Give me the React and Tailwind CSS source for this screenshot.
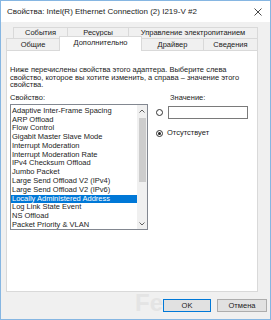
import React from 'react';

const props = [
  'Adaptive Inter-Frame Spacing',
  'ARP Offload',
  'Flow Control',
  'Gigabit Master Slave Mode',
  'Interrupt Moderation',
  'Interrupt Moderation Rate',
  'IPv4 Checksum Offload',
  'Jumbo Packet',
  'Large Send Offload V2 (IPv4)',
  'Large Send Offload V2 (IPv6)',
  'Locally Administered Address',
  'Log Link State Event',
  'NS Offload',
  'Packet Priority & VLAN',
];

function Radio({ checked }) {
  return (
    <span className="w-[7px] h-[7px] rounded-full border border-[#333] bg-white flex items-center justify-center shrink-0">
      {checked && <span className="w-[3px] h-[3px] rounded-full bg-[#222]" />}
    </span>
  );
}

export default function App() {
  return (
    <div className="relative w-[271px] h-[320px] border border-[#86b6e2] bg-[#f0f0f0] flex flex-col overflow-hidden font-['Liberation_Sans',Arial,sans-serif] text-[7.5px] text-[#1b1b1b]">
      {/* заголовок окна */}
      <div className="h-[21px] bg-white flex items-center pl-[6px] pr-[8px] shrink-0">
        <span className="flex-1 text-[8px] text-[#222]">Свойства: Intel(R) Ethernet Connection (2) I219-V #2</span>
        <svg width="8" height="8" viewBox="0 0 8 8">
          <path d="M0.5 0.5 L7.5 7.5 M7.5 0.5 L0.5 7.5" stroke="#333" strokeWidth="0.9" fill="none" />
        </svg>
      </div>

      {/* вкладки */}
      <div className="mt-[5px] flex h-[11px] ml-[12px]">
        <div className="w-[54px] border-t border-l border-[#d9d9d9] flex items-center justify-center">События</div>
        <div className="w-[61px] border-t border-l border-[#d9d9d9] flex items-center justify-center">Ресурсы</div>
        <div className="w-[130px] border-t border-l border-r border-[#d9d9d9] flex items-center justify-center">Управление электропитанием</div>
      </div>
      <div className="flex items-end h-[12px] ml-[5px] relative z-10">
        <div className="w-[53px] h-[12px] border-t border-l border-[#d9d9d9] flex items-center justify-center">Общие</div>
        <div className="w-[83px] h-[15px] -mb-px bg-white border-t border-l border-r border-[#d9d9d9] flex items-center justify-center pb-[2px]">Дополнительно</div>
        <div className="w-[61px] h-[12px] border-t border-[#d9d9d9] flex items-center justify-center">Драйвер</div>
        <div className="w-[55px] h-[12px] border-t border-l border-r border-[#d9d9d9] flex items-center justify-center">Сведения</div>
      </div>

      {/* панель */}
      <div className="ml-[5px] w-[252px] h-[242px] bg-white border border-[#d9d9d9] pl-[3px] pt-[15px] shrink-0">
        <p className="leading-[7.7px]">
          Ниже перечислены свойства этого адаптера. Выберите слева
          <br />
          свойство, которое вы хотите изменить, а справа – значение этого
          <br />
          свойства.
        </p>

        <div className="flex mt-[5px]">
          <div className="w-[138px] shrink-0">
            <div className="h-[8px] leading-[8px]">Свойство:</div>
            <div className="mt-[2px] h-[126px] border border-[#828790] bg-white flex overflow-hidden">
              <div className="flex-1 pt-[1.6px] overflow-hidden">
                {props.map((p, i) => (
                  <div
                    key={p}
                    className={
                      i === 10
                        ? 'h-[8.8px] leading-[8.8px] pl-[1px] bg-[#0078d7] text-white whitespace-nowrap'
                        : 'h-[8.8px] leading-[8.8px] pl-[1px] whitespace-nowrap'
                    }
                  >
                    {p}
                  </div>
                ))}
              </div>
              <div className="w-[10px] bg-[#f0f0f0] flex flex-col items-center shrink-0">
                <div className="h-[11px] flex items-center justify-center">
                  <svg width="6" height="4" viewBox="0 0 6 4">
                    <path d="M0.5 3.5 L3 1 L5.5 3.5" stroke="#606060" strokeWidth="1" fill="none" />
                  </svg>
                </div>
                <div className="w-[7px] h-[64px] mt-[2px] bg-[#cdcdcd]" />
                <div className="flex-1" />
                <div className="h-[11px] flex items-center justify-center">
                  <svg width="6" height="4" viewBox="0 0 6 4">
                    <path d="M0.5 0.5 L3 3 L5.5 0.5" stroke="#606060" strokeWidth="1" fill="none" />
                  </svg>
                </div>
              </div>
            </div>
          </div>

          <div className="ml-[8px] flex-1">
            <div className="h-[8px] leading-[8px] pl-[14px]">Значение:</div>
            <div className="mt-[4px] flex items-center gap-[5px]">
              <Radio />
              <div className="w-[80px] h-[13px] border border-[#7a7a7a] bg-white" />
            </div>
            <div className="mt-[10px] flex items-center gap-[4px] h-[8px]">
              <Radio checked />
              <span>Отсутствует</span>
            </div>
          </div>
        </div>
      </div>

      {/* водяной знак */}
      <div className="absolute left-[134px] top-[290px] text-[24px] font-bold text-[#e4e4e4] leading-none select-none">
        Fe
      </div>

      {/* кнопки */}
      <div className="relative flex justify-end gap-[6px] mt-[7px] pr-[3px]">
        <button className="w-[48px] h-[13px] bg-[#e1e1e1] border border-[#0078d7] leading-none">OK</button>
        <button className="w-[50px] h-[13px] bg-[#e1e1e1] border border-[#adadad] leading-none">Отмена</button>
      </div>
    </div>
  );
}
